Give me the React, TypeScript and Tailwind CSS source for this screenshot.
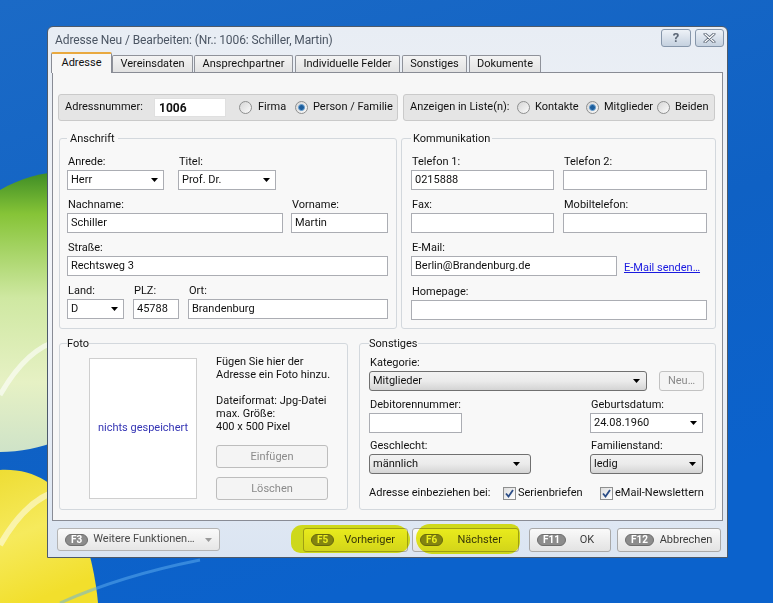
import React from 'react';

// Windows 7 style "Adresse Neu / Bearbeiten" dialog on the default desktop

const Wallpaper = () => (
  <svg className="absolute inset-0" width="773" height="603" viewBox="0 0 773 603">
    <defs>
      <linearGradient id="sky" x1="0" y1="0" x2="0.4" y2="1">
        <stop offset="0" stopColor="#1b6ac6" />
        <stop offset="0.6" stopColor="#0f61c4" />
        <stop offset="1" stopColor="#0b62cc" />
      </linearGradient>
      <linearGradient id="leaf" x1="0" y1="0" x2="0" y2="1">
        <stop offset="0" stopColor="#3d8c25" />
        <stop offset="0.15" stopColor="#86c437" />
        <stop offset="0.45" stopColor="#cfe8a2" />
        <stop offset="0.75" stopColor="#e6f1c4" />
        <stop offset="1" stopColor="#cfe3c8" />
      </linearGradient>
      <linearGradient id="sun" x1="0" y1="0" x2="0.3" y2="1">
        <stop offset="0" stopColor="#eedd34" />
        <stop offset="0.5" stopColor="#f6ea5c" />
        <stop offset="1" stopColor="#f2df2c" />
      </linearGradient>
    </defs>
    <rect width="773" height="603" fill="url(#sky)" />
    <path d="M0 190 C 20 178 45 172 60 172 L 60 440 C 40 448 20 452 0 452 Z" fill="url(#leaf)" />
    <path d="M0 470 C 40 468 65 490 80 525 C 90 550 96 580 98 603 L 0 603 Z" fill="url(#sun)" />
    <path d="M0 395 C 20 360 40 345 60 340" stroke="#ffffff" strokeOpacity="0.6" strokeWidth="5" fill="none" />
    <path d="M0 545 C 20 510 40 495 60 490" stroke="#ffffff" strokeOpacity="0.5" strokeWidth="6" fill="none" />
    <path d="M60 603 C 100 585 150 570 200 560" stroke="#5fb0f0" strokeOpacity="0.5" strokeWidth="3" fill="none" />
  </svg>
);

const Arrow = ({ color = '#000' }: { color?: string }) => (
  <svg width="7" height="4" viewBox="0 0 7 4" className="flex-none">
    <path d="M0 0h7l-3.5 4z" fill={color} />
  </svg>
);

const Radio = ({ checked }: { checked?: boolean }) => (
  <span className="w-[13px] h-[13px] flex-none rounded-full border border-[#8e8f8f] bg-gradient-to-br from-[#d6d6d6] to-[#fbfbfb] flex items-center justify-center">
    {checked && <span className="w-[7px] h-[7px] rounded-full bg-[#1c5d9c] border border-[#6aa0d0]" />}
  </span>
);

const Checkbox = () => (
  <span className="w-[13px] h-[13px] flex-none border border-[#8e8f8f] bg-gradient-to-br from-[#dedede] to-[#ffffff] flex items-center justify-center">
    <svg width="9" height="9" viewBox="0 0 9 9">
      <path d="M1 4.5 L3.5 7.5 L8 1" stroke="#2a4c86" strokeWidth="1.8" fill="none" />
    </svg>
  </span>
);

const Label = ({ children, className = '' }: { children?: React.ReactNode; className?: string }) => (
  <div className={`h-[13px] leading-[13px] whitespace-nowrap ${className}`}>{children}</div>
);

const TextBox = ({ w, value }: { w: string; value?: string }) => (
  <div className={`${w} h-[20px] mt-[2px] border border-[#abadb3] bg-white pl-[3px] flex items-center whitespace-nowrap`}>
    {value}
  </div>
);

const EditCombo = ({ w, value }: { w: string; value?: string }) => (
  <div className={`${w} h-[20px] mt-[2px] border border-[#abadb3] bg-white pl-[3px] pr-[5px] flex items-center justify-between`}>
    <span>{value}</span>
    <Arrow />
  </div>
);

const DropList = ({ w, value, pr = 'pr-[6px]' }: { w: string; value: string; pr?: string }) => (
  <div className={`${w} ${pr} h-[20px] mt-[2px] rounded-[3px] border border-[#707070] bg-gradient-to-b from-[#f2f2f2] via-[#ebebeb] to-[#d4d4d4] pl-[3px] flex items-center justify-between`}>
    <span>{value}</span>
    <Arrow />
  </div>
);

const Field = ({ label, children, className = '' }: { label: string; children: React.ReactNode; className?: string }) => (
  <div className={`flex flex-col ${className}`}>
    <Label className="pl-px">{label}</Label>
    {children}
  </div>
);

const Pill = ({ k }: { k: string }) => (
  <span className="h-[12px] px-[5px] flex-none rounded-full flex items-center justify-center text-[10px] font-bold leading-none text-white border bg-[#8c8c8c] border-[#6e6e6e]">
    {k}
  </span>
);

const FootButton = ({ k, label, w, className = '' }: { k: string; label: string; w: string; className?: string }) => (
  <div className={`${w} ${className} h-[24px] flex-none rounded-[3px] border border-[#a9a9a9] bg-gradient-to-b from-[#fafafa] to-[#e3e3e3] flex items-center pl-[7px] pr-[2px]`}>
    <Pill k={k} />
    <span className="flex-1 text-center text-[#3c3c3c]">{label}</span>
  </div>
);

export default function App() {
  const tabs = [
    { name: 'Vereinsdaten', w: 'w-[81px]', ml: 'ml-0' },
    { name: 'Ansprechpartner', w: 'w-[99px]', ml: 'ml-[1px]' },
    { name: 'Individuelle Felder', w: 'w-[105px]', ml: 'ml-[2px]' },
    { name: 'Sonstiges', w: 'w-[65px]', ml: 'ml-[2px]' },
    { name: 'Dokumente', w: 'w-[72px]', ml: 'ml-[2px]' },
  ];

  return (
    <div className="w-[773px] h-[603px] relative overflow-hidden bg-[#1565c6] font-['Roboto','Liberation_Sans',sans-serif] text-[11px] text-[#111]">
      <Wallpaper />

      <div className="relative pt-[26px] pl-[47px]">
        <div className="w-[681px] h-[532px] border border-[#4d5a6a] rounded-t-[6px] bg-gradient-to-b from-[#e8edf4] via-[#f3f5f9] to-[#dbe5f2] flex flex-col">
          {/* Title bar */}
          <div className="h-[25px] flex items-start flex-none">
            <div className="pl-[7px] pt-[4px] text-[12px] tracking-[-0.1px] text-[#4b5563] whitespace-nowrap">
              Adresse Neu / Bearbeiten: (Nr.: 1006: Schiller, Martin)
            </div>
            <div className="ml-auto mt-[2px] mr-[3px] flex gap-[4px]">
              <div className="w-[30px] h-[18px] rounded-[3px] border border-[#8696aa] bg-gradient-to-b from-[#eef2f7] to-[#c5d1df] flex items-center justify-center text-[13px] font-bold text-[#5d6877]">
                ?
              </div>
              <div className="w-[29px] h-[18px] rounded-[3px] border border-[#8696aa] bg-gradient-to-b from-[#eef2f7] to-[#c5d1df] flex items-center justify-center">
                <svg width="13" height="10" viewBox="0 0 13 10">
                  <path d="M2 1 L11 9 M11 1 L2 9" stroke="#5d6877" strokeWidth="3" strokeLinecap="round" />
                  <path d="M2 1 L11 9 M11 1 L2 9" stroke="#ffffff" strokeWidth="1.2" strokeLinecap="round" />
                </svg>
              </div>
            </div>
          </div>

          {/* Tabs */}
          <div className="h-[20px] flex items-end pl-[3px] flex-none">
            <div className="relative z-10 w-[61px] h-[21px] -mb-px flex-none border border-b-0 border-[#898c95] border-t-2 border-t-[#e9a940] rounded-t-[2px] bg-[#f7f7f7] flex items-center justify-center">
              Adresse
            </div>
            {tabs.map((t) => (
              <div
                key={t.name}
                className={`${t.w} ${t.ml} h-[17px] flex-none border border-b-0 border-[#8f929a] rounded-t-[2px] bg-gradient-to-b from-[#f4f4f4] to-[#e2e2e2] flex items-center justify-center whitespace-nowrap`}
              >
                {t.name}
              </div>
            ))}
          </div>

          {/* Tab page */}
          <div className="ml-[4px] w-[671px] h-[449px] flex-none border border-[#898c95] bg-[#f7f7f7]">
            {/* Top row */}
            <div className="mt-[21px] flex">
              <div className="ml-[5px] w-[340px] h-[27px] rounded-[3px] border border-[#cacaca] bg-[#e5e5e5] flex items-center pl-[6px]">
                <span className="w-[89px] flex-none">Adressnummer:</span>
                <div className="w-[72px] h-[19px] flex-none bg-white border border-[#e0e0e0] pl-[4px] flex items-center text-[12px] font-bold">
                  1006
                </div>
                <div className="ml-[13px] w-[56px] flex items-center flex-none">
                  <Radio />
                  <span className="ml-[6px]">Firma</span>
                </div>
                <div className="flex items-center">
                  <Radio checked />
                  <span className="ml-[5px] whitespace-nowrap">Person / Familie</span>
                </div>
              </div>
              <div className="ml-[5px] w-[312px] h-[27px] rounded-[3px] border border-[#cacaca] bg-[#e5e5e5] flex items-center pl-[6px]">
                <span className="w-[107px] flex-none whitespace-nowrap">Anzeigen in Liste(n):</span>
                <div className="w-[69px] flex items-center flex-none">
                  <Radio />
                  <span className="ml-[5px]">Kontakte</span>
                </div>
                <div className="w-[71px] flex items-center flex-none">
                  <Radio checked />
                  <span className="ml-[5px]">Mitglieder</span>
                </div>
                <div className="flex items-center">
                  <Radio />
                  <span className="ml-[5px]">Beiden</span>
                </div>
              </div>
            </div>

            {/* Anschrift + Kommunikation */}
            <div className="mt-[11px] flex">
              <fieldset className="ml-[6px] w-[338px] h-[197px] rounded-[3px] border border-[#d3d8dd] bg-[#f8f8f8] pl-[7px]">
                <legend className="px-[3px] leading-[13px]">Anschrift</legend>
                <div className="pt-[10px] flex flex-col gap-[8px]">
                  <div className="flex gap-[14px]">
                    <Field label="Anrede:"><EditCombo w="w-[97px]" value="Herr" /></Field>
                    <Field label="Titel:"><EditCombo w="w-[98px]" value="Prof. Dr." /></Field>
                  </div>
                  <div className="flex gap-[8px]">
                    <Field label="Nachname:"><TextBox w="w-[216px]" value="Schiller" /></Field>
                    <Field label="Vorname:"><TextBox w="w-[97px]" value="Martin" /></Field>
                  </div>
                  <Field label="Straße:"><TextBox w="w-[321px]" value="Rechtsweg 3" /></Field>
                  <div className="flex gap-[9px]">
                    <Field label="Land:"><EditCombo w="w-[57px]" value="D" /></Field>
                    <Field label="PLZ:"><TextBox w="w-[46px]" value="45788" /></Field>
                    <Field label="Ort:"><TextBox w="w-[200px]" value="Brandenburg" /></Field>
                  </div>
                </div>
              </fieldset>

              <fieldset className="ml-[4px] w-[315px] h-[197px] rounded-[3px] border border-[#d3d8dd] bg-[#f8f8f8] pl-[9px]">
                <legend className="px-[2px] leading-[13px]">Kommunikation</legend>
                <div className="pt-[10px] flex flex-col gap-[8px]">
                  <div className="flex gap-[9px]">
                    <Field label="Telefon 1:"><TextBox w="w-[143px]" value="0215888" /></Field>
                    <Field label="Telefon 2:"><TextBox w="w-[144px]" /></Field>
                  </div>
                  <div className="flex gap-[9px]">
                    <Field label="Fax:"><TextBox w="w-[143px]" /></Field>
                    <Field label="Mobiltelefon:"><TextBox w="w-[144px]" /></Field>
                  </div>
                  <div className="flex">
                    <Field label="E-Mail:"><TextBox w="w-[206px]" value="Berlin@Brandenburg.de" /></Field>
                    <span className="ml-[7px] mt-[19px] text-[#1a1ae0] underline whitespace-nowrap">E-Mail senden…</span>
                  </div>
                  <Field label="Homepage:"><TextBox w="w-[296px]" /></Field>
                </div>
              </fieldset>
            </div>

            {/* Foto + Sonstiges */}
            <div className="mt-[8px] flex">
              <fieldset className="ml-[6px] w-[289px] h-[173px] rounded-[3px] border border-[#d3d8dd] bg-[#f8f8f8] pl-[7px]">
                <legend className="leading-[13px]">Foto</legend>
                <div className="pt-[5px] flex items-start">
                  <div className="ml-[22px] mt-[3px] w-[108px] h-[141px] flex-none bg-white border border-[#cfcfcf] flex items-center justify-center text-[#3434b4]">
                    nichts gespeichert
                  </div>
                  <div className="ml-[19px] flex flex-col leading-[13px]">
                    <span>Fügen Sie hier der</span>
                    <span>Adresse ein Foto hinzu.</span>
                    <span className="mt-[13px]">Dateiformat: Jpg-Datei</span>
                    <span>max. Größe:</span>
                    <span>400 x 500 Pixel</span>
                    <div className="mt-[12px] w-[112px] h-[23px] rounded-[3px] border border-[#bdbdbd] bg-[#f4f4f4] flex items-center justify-center text-[#8a8a8a]">
                      Einfügen
                    </div>
                    <div className="mt-[9px] w-[112px] h-[23px] rounded-[3px] border border-[#bdbdbd] bg-[#f4f4f4] flex items-center justify-center text-[#8a8a8a]">
                      Löschen
                    </div>
                  </div>
                </div>
              </fieldset>

              <fieldset className="ml-[11px] w-[357px] h-[173px] rounded-[3px] border border-[#d3d8dd] bg-[#f8f8f8] pl-[9px]">
                <legend className="leading-[13px]">Sonstiges</legend>
                <div className="pt-[6px] flex flex-col">
                  <div className="flex items-end">
                    <Field label="Kategorie:"><DropList w="w-[278px]" value="Mitglieder" pr="pr-[6px]" /></Field>
                    <div className="ml-[12px] w-[45px] h-[20px] rounded-[3px] border border-[#c2c2c2] bg-[#f4f4f4] flex items-center justify-center text-[#8a8a8a]">
                      Neu…
                    </div>
                  </div>
                  <div className="mt-[7px] flex">
                    <Field label="Debitorennummer:" className="w-[221px]"><TextBox w="w-[93px]" /></Field>
                    <Field label="Geburtsdatum:"><EditCombo w="w-[113px]" value="24.08.1960" /></Field>
                  </div>
                  <div className="mt-[6px] flex">
                    <Field label="Geschlecht:" className="w-[221px]"><DropList w="w-[162px]" value="männlich" pr="pr-[10px]" /></Field>
                    <Field label="Familienstand:"><DropList w="w-[113px]" value="ledig" /></Field>
                  </div>
                  <div className="mt-[12px] flex items-center h-[14px]">
                    <span className="w-[134px] flex-none whitespace-nowrap">Adresse einbeziehen bei:</span>
                    <div className="w-[97px] flex items-center flex-none">
                      <Checkbox />
                      <span className="ml-[2px]">Serienbriefen</span>
                    </div>
                    <div className="flex items-center">
                      <Checkbox />
                      <span className="ml-[2px] whitespace-nowrap">eMail-Newslettern</span>
                    </div>
                  </div>
                </div>
              </fieldset>
            </div>
          </div>

          {/* Bottom buttons */}
          <div className="relative flex-1 flex items-start pt-[7px] pl-[9px]">
            <div className="w-[163px] h-[23px] flex-none rounded-[3px] border border-[#b4b4b4] bg-gradient-to-b from-[#fafafa] to-[#e6e6e6] flex items-center pl-[7px] pr-[7px]">
              <Pill k="F3" />
              <span className="ml-[5px] text-[#4a4a4a] whitespace-nowrap">Weitere Funktionen…</span>
              <span className="ml-auto"><Arrow color="#9a9a9a" /></span>
            </div>
            <FootButton k="F5" label="Vorheriger" w="w-[105px]" className="ml-[83px]" />
            <FootButton k="F6" label="Nächster" w="w-[107px]" className="ml-[4px]" />
            <FootButton k="F11" label="OK" w="w-[82px]" className="ml-[10px]" />
            <FootButton k="F12" label="Abbrechen" w="w-[104px]" className="ml-[6px]" />

            {/* highlighter marks */}
            <span className="absolute left-[243px] top-[4px] w-[119px] h-[28px] rounded-[12px_16px_14px_10px] bg-[#eef01c] mix-blend-multiply" />
            <span className="absolute left-[368px] top-[3px] w-[104px] h-[30px] rounded-[16px_10px_14px_18px] bg-[#eef01c] mix-blend-multiply" />
          </div>
        </div>
      </div>
    </div>
  );
}
